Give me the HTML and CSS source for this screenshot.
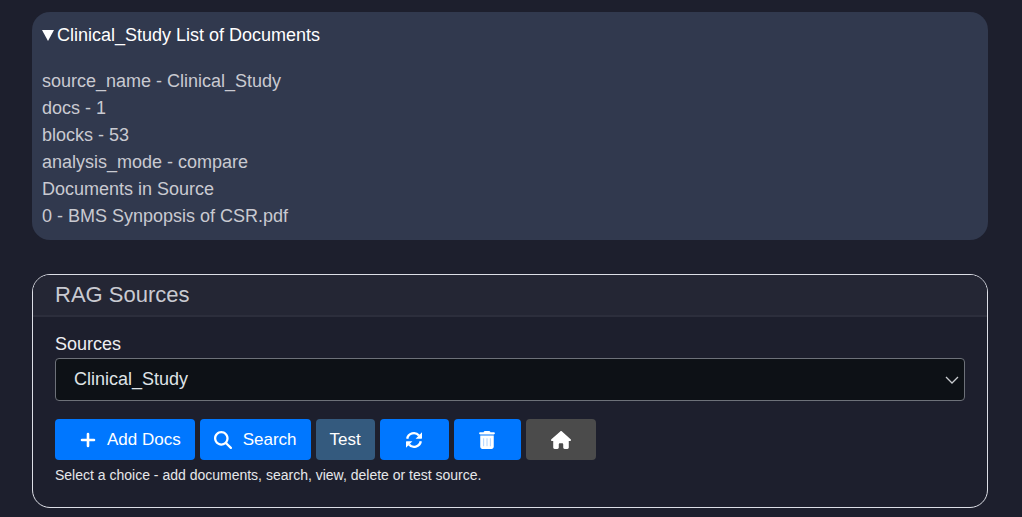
FILE: index.html
```html
<!DOCTYPE html>
<html lang="en">
<head>
<meta charset="utf-8">
<title>RAG Sources</title>
<link rel="stylesheet" href="styles.css">
</head>
<body>
<main class="page">
  <details class="documents" open>
    <summary class="documents-title"><svg class="marker" viewBox="0 0 12 11" aria-hidden="true"><path d="M0 0h12L6 11z"/></svg>Clinical_Study List of Documents</summary>
    <div class="documents-body">
      <div>source_name - Clinical_Study</div>
      <div>docs - 1</div>
      <div>blocks - 53</div>
      <div>analysis_mode - compare</div>
      <div>Documents in Source</div>
      <div>0 - BMS Synpopsis of CSR.pdf</div>
    </div>
  </details>

  <section class="card">
    <h2 class="card-header">RAG Sources</h2>
    <form class="card-body">
      <label class="label" for="source">Sources</label>
      <div class="select-wrap">
        <select class="select" id="source"><option>Clinical_Study</option></select>
        <svg class="chevron" viewBox="0 0 16 16" aria-hidden="true"><path d="M2 5l6 6 6-6"/></svg>
      </div>
      <div class="actions">
        <button class="btn btn-add" type="button"><svg class="icon icon-plus" viewBox="0 0 16 18" aria-hidden="true"><path d="M8 3v12M2 9h12"/></svg>Add Docs</button>
        <button class="btn btn-search" type="button"><svg class="icon" viewBox="0 0 512 512" aria-hidden="true"><path d="M416 208c0 45.9-14.9 88.3-40 122.7L502.6 457.4c12.5 12.5 12.5 32.8 0 45.3s-32.8 12.5-45.3 0L330.7 376c-34.4 25.2-76.8 40-122.7 40C93.1 416 0 322.9 0 208S93.1 0 208 0S416 93.1 416 208zM208 352a144 144 0 1 0 0-288 144 144 0 1 0 0 288z"/></svg>Search</button>
        <button class="btn btn-test" type="button">Test</button>
        <button class="btn btn-refresh" type="button" aria-label="Refresh"><svg class="icon" viewBox="0 0 18 18" aria-hidden="true"><path class="arc" d="M2.200 7.700A6.800 6.800 0 0 1 14 4.500M15.800 10.300A6.800 6.800 0 0 1 4 13.500"/><path d="M17 1.300v5.800q0 .6-.6.6h-5.800zM1 16.700v-5.800q0-.6.6-.6h5.800z"/></svg></button>
        <button class="btn btn-delete" type="button" aria-label="Delete"><svg class="icon icon-trash" viewBox="0 0 448 512" aria-hidden="true"><path d="M135.200 17.700L128 32H32C14.300 32 0 46.300 0 64S14.300 96 32 96H416c17.700 0 32-14.300 32-32s-14.300-32-32-32H320l-7.200-14.300C307.400 6.800 296.300 0 284.200 0H163.800c-12.100 0-23.200 6.800-28.600 17.700zM32 128V448c0 35.300 28.700 64 64 64H352c35.300 0 64-28.700 64-64V128z"/><path class="slots" d="M128 208V432M224 208V432M320 208V432"/></svg></button>
        <button class="btn btn-home" type="button" aria-label="Home"><svg class="icon icon-home" viewBox="0 0 576 512" aria-hidden="true"><path d="M575.800 255.500c0 18-15 32.100-32 32.100h-32l.7 160.200V472c0 22.100-17.900 40-40 40H392c-22.100 0-40-17.900-40-40V384c0-17.700-14.300-32-32-32H256c-17.700 0-32 14.300-32 32v88c0 22.100-17.900 40-40 40H104c-22.100 0-40-17.900-40-40V287.600H32c-18 0-32-14-32-32.100c0-9 3-17 10-24L266.400 8c7-7 15-8 22-8s15 2 21 7L564.800 231.500c8 7 12 15 11 24z"/></svg></button>
      </div>
      <p class="hint">Select a choice - add documents, search, view, delete or test source.</p>
    </form>
  </section>
</main>
</body>
</html>
```

FILE: styles.css
```css
* {
  box-sizing: border-box;
}

body {
  margin: 0;
  background: #1d1f2d;
  color: #c9cad1;
  font: 18px/27px "Liberation Sans", Arial, sans-serif;
}

.page {
  display: flex;
  flex-direction: column;
  gap: 34px;
  padding: 12px 34px 8px 32px;
}

.documents {
  padding: 10px;
  border-radius: 18px;
  background: #31394e;
}

.documents-title {
  display: flex;
  align-items: center;
  gap: 3px;
  color: #fff;
  list-style: none;
}

.marker {
  width: 12px;
  height: 11px;
  fill: #fff;
}

.documents-body {
  padding-top: 19px;
}

.card {
  border: 1px solid #dcdee6;
  border-radius: 18px;
  overflow: hidden;
}

.card-header {
  margin: 0;
  padding: 6px 22px 7px;
  border-bottom: 2px solid #2c2e3c;
  background: #242634;
  font-size: 22px;
  font-weight: 400;
  line-height: 27px;
}

.card-body {
  padding: 14px 22px 22px;
}

.label {
  display: block;
  color: #edeef1;
}

.select-wrap {
  display: grid;
  align-items: center;
}

.select,
.chevron {
  grid-area: 1 / 1;
}

.select {
  width: 100%;
  height: 43px;
  padding: 0 40px 0 18px;
  border: 1px solid #6d7179;
  border-radius: 4px;
  appearance: none;
  background: #0d1116;
  color: #dfe3e6;
  font: inherit;
}

.chevron {
  justify-self: end;
  width: 16px;
  height: 16px;
  margin-right: 5px;
  fill: none;
  stroke: #c9ccd0;
  stroke-width: 1.3;
  pointer-events: none;
}

.actions {
  display: flex;
  flex-wrap: wrap;
  gap: 5px;
  margin-top: 18px;
}

.btn {
  display: flex;
  align-items: center;
  justify-content: center;
  gap: 11px;
  height: 41px;
  padding: 0 14px;
  border: 0;
  border-radius: 4px;
  background: #0077ff;
  color: #fff;
  font: inherit;
  font-size: 17px;
}

.btn-add {
  padding-left: 25px;
}

.btn-test {
  background: #345a7e;
}

.btn-refresh {
  width: 69px;
}

.btn-delete {
  width: 67px;
}

.btn-home {
  width: 70px;
  background: #4b4b4b;
}

.icon {
  width: 18px;
  height: 18px;
  fill: #fff;
}

.icon-plus {
  width: 16px;
  stroke: #fff;
  stroke-width: 2.6;
  stroke-linecap: round;
}

.icon-trash {
  width: 16px;
}

.icon-home {
  width: 20px;
}

.arc {
  fill: none;
  stroke: #fff;
  stroke-width: 2.4;
}

.slots {
  stroke: #a9d0ff;
  stroke-width: 26;
}

.hint {
  margin: 5px 0 0;
  color: #e6e7ea;
  font-size: 14px;
  line-height: 20px;
}
```
